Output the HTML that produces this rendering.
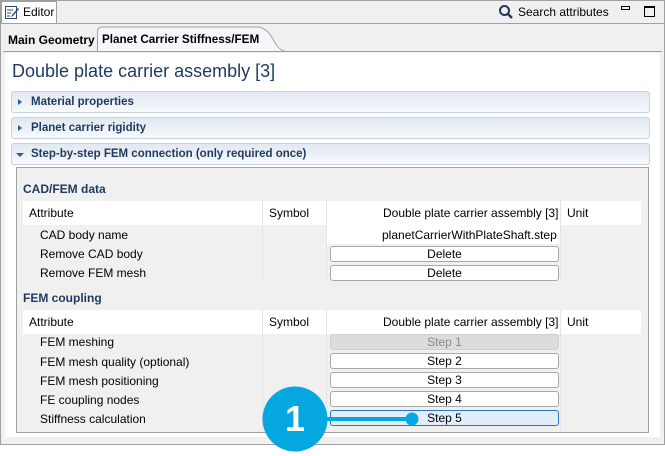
<!DOCTYPE html>
<html><head><style>
*{box-sizing:border-box}
body{margin:0;width:665px;height:456px;background:#fff;font-family:"Liberation Sans",sans-serif;position:relative;overflow:hidden;font-size:12px;color:#000}
.abs{position:absolute}
.hdr{position:absolute;left:11px;width:639px;height:22px;border:1px solid #c5d2e0;border-radius:3px;background:linear-gradient(#e1e8f1,#f7f9fc);color:#1f3a5f;font-weight:bold;font-size:11.5px;line-height:20px;padding-left:19px}
.tri{position:absolute;left:6px;top:7px;width:0;height:0;border-left:4px solid #2a5d9f;border-top:3.5px solid transparent;border-bottom:3.5px solid transparent}
.trid{position:absolute;left:4px;top:9px;width:0;height:0;border-top:4px solid #2a5d9f;border-left:4px solid transparent;border-right:4px solid transparent}
.t{position:absolute;white-space:nowrap}
.btn{position:absolute;left:330px;width:229px;height:16px;border:1px solid #a8a8a8;border-radius:3px;background:#fff;text-align:center;line-height:14px;font-size:12px}
.sec{color:#1f3a5f;font-weight:bold}
</style></head><body>
<div class="abs" style="left:0;top:0;width:665px;height:445px;background:#f0f0f0;border:1px solid #a0a0a0"></div>
<div class="abs" style="left:1px;top:1px;width:56px;height:23px;background:#fff;border:1px solid #a0a0a0;border-bottom:none"></div>
<svg class="abs" style="left:4px;top:4px" width="16" height="16" viewBox="0 0 16 16"><rect x="1.5" y="2.5" width="11" height="12" fill="none" stroke="#2a4a70"/><path d="M3 6h6M3 9h4M3 12h3" stroke="#2a4a70"/><path d="M8 11l6-7 1 1-6 7-2 1z" fill="#2a4a70"/></svg>
<div class="t" style="left:23px;top:5px">Editor</div>
<div class="abs" style="left:0;top:23px;width:665px;height:1px;background:#a0a0a0"></div>
<svg class="abs" style="left:498px;top:4px" width="16" height="16"><circle cx="6.5" cy="6.5" r="4.5" fill="none" stroke="#1f3a5f" stroke-width="2"/><path d="M10 10l4 4" stroke="#1f3a5f" stroke-width="2.5"/></svg>
<div class="t" style="left:518px;top:5px">Search attributes</div>
<div class="abs" style="left:621px;top:6px;width:9px;height:4px;border:1px solid #000"></div>
<div class="abs" style="left:644px;top:6px;width:11px;height:11px;border:1px solid #000;border-top-width:2px"></div>
<div class="t" style="left:8px;top:33px;font-weight:bold">Main Geometry</div>
<svg class="abs" style="left:97px;top:26px" width="190" height="26"><path d="M0.5 26V6Q0.5 1 6 1H160Q168 1 174 10L180 20Q184 25 190 25.5" fill="#f5f8fb" stroke="#a0a0a0"/></svg>
<div class="t" style="left:102px;top:33px;font-weight:bold;font-size:11.7px">Planet Carrier Stiffness/FEM</div>
<div class="abs" style="left:3px;top:51px;width:659px;height:1px;background:#a0a0a0"></div>
<div class="abs" style="left:5px;top:53px;width:655px;height:384px;background:#fff"></div>
<div class="t" style="left:12px;top:61px;font-size:18px;color:#1f3a5f">Double plate carrier assembly [3]</div>
<div class="hdr" style="top:91px"><div class="tri"></div>Material properties</div>
<div class="hdr" style="top:117px"><div class="tri"></div>Planet carrier rigidity</div>
<div class="hdr" style="top:143px"><div class="trid"></div>Step-by-step FEM connection (only required once)</div>
<div class="abs" style="left:16px;top:167px;width:633px;height:266px;background:#f0f0f0;border:1px solid #a0a0a0"></div>
<div class="t sec" style="left:23px;top:182px">CAD/FEM data</div>
<div class="abs" style="left:23px;top:201px;width:618px;height:24px;background:#fff"></div>
<div class="abs" style="left:262px;top:201px;width:1px;height:80px;background:#e4e4e4"></div>
<div class="abs" style="left:326px;top:201px;width:1px;height:80px;background:#e4e4e4"></div>
<div class="abs" style="left:560px;top:201px;width:1px;height:80px;background:#e4e4e4"></div>
<div class="abs" style="left:327px;top:225px;width:233px;height:19px;background:#fff"></div>
<div class="t" style="left:29px;top:206px">Attribute</div>
<div class="t" style="left:269px;top:206px">Symbol</div>
<div class="t" style="left:383px;top:206px">Double plate carrier assembly [3]</div>
<div class="t" style="left:567px;top:206px">Unit</div>
<div class="t" style="left:40px;top:228px">CAD body name</div>
<div class="t" style="left:382px;top:228px">planetCarrierWithPlateShaft.step</div>
<div class="t" style="left:40px;top:247px">Remove CAD body</div>
<div class="btn" style="top:246px">Delete</div>
<div class="t" style="left:40px;top:266px">Remove FEM mesh</div>
<div class="btn" style="top:265px">Delete</div>
<div class="t sec" style="left:23px;top:291px">FEM coupling</div>
<div class="abs" style="left:23px;top:310px;width:618px;height:24px;background:#fff"></div>
<div class="abs" style="left:262px;top:310px;width:1px;height:120px;background:#e4e4e4"></div>
<div class="abs" style="left:326px;top:310px;width:1px;height:120px;background:#e4e4e4"></div>
<div class="abs" style="left:560px;top:310px;width:1px;height:120px;background:#e4e4e4"></div>
<div class="t" style="left:29px;top:315px">Attribute</div>
<div class="t" style="left:269px;top:315px">Symbol</div>
<div class="t" style="left:383px;top:315px">Double plate carrier assembly [3]</div>
<div class="t" style="left:567px;top:315px">Unit</div>
<div class="t" style="left:40px;top:335px">FEM meshing</div>
<div class="btn" style="top:334px;background:#dcdcdc;border-color:#cfcfcf;color:#8a8a8a">Step 1</div>
<div class="t" style="left:40px;top:355px">FEM mesh quality (optional)</div>
<div class="btn" style="top:353px">Step 2</div>
<div class="t" style="left:40px;top:374px">FEM mesh positioning</div>
<div class="btn" style="top:372px">Step 3</div>
<div class="t" style="left:40px;top:393px">FE coupling nodes</div>
<div class="btn" style="top:391px">Step 4</div>
<div class="t" style="left:40px;top:412px">Stiffness calculation</div>
<div class="btn" style="top:410px;background:#e1edf9;border-color:#2b74c9">Step 5</div>
<svg class="abs" style="left:260px;top:384px" width="160" height="72"><path d="M35 35H152" stroke="#04a7e0" stroke-width="4"/><circle cx="152" cy="35" r="6.5" fill="#04a7e0"/><circle cx="35" cy="35" r="32.5" fill="#04a7e0"/><text x="35" y="47" text-anchor="middle" fill="#fff" font-family="Liberation Sans,sans-serif" font-size="36" font-weight="bold">1</text></svg>
</body></html>
